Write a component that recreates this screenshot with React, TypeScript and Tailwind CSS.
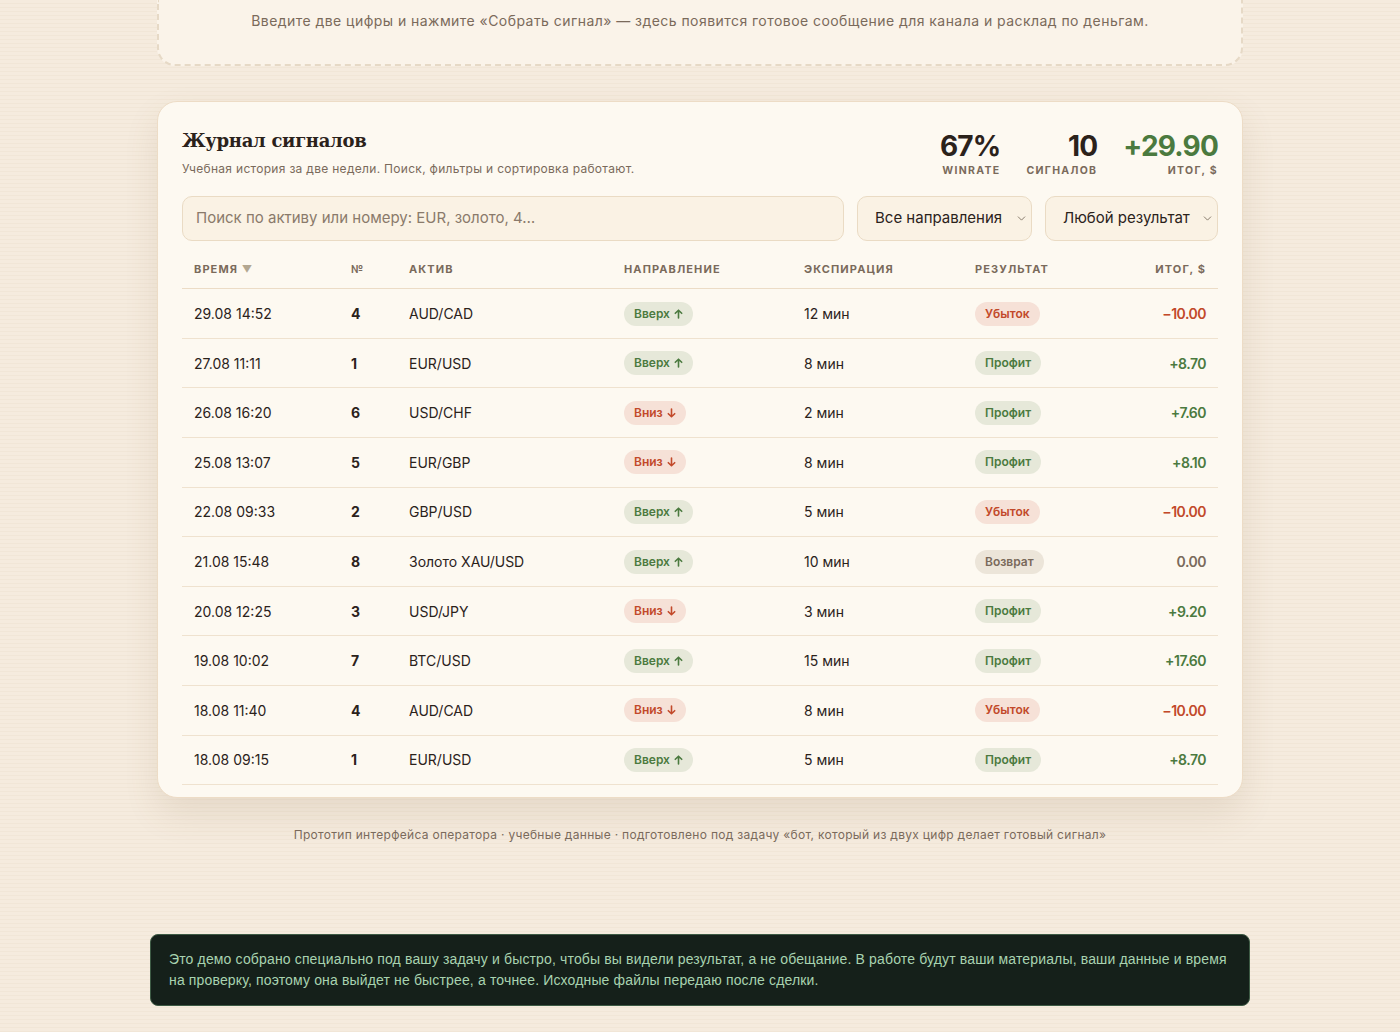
import React from 'react';
import { ChevronDown } from 'lucide-react';

type Row = {
  time: string;
  num: number;
  asset: string;
  dir: 'up' | 'down';
  exp: string;
  res: 'win' | 'loss' | 'refund';
  total: string;
};

const rows: Row[] = [
  { time: '29.08 14:52', num: 4, asset: 'AUD/CAD', dir: 'up', exp: '12 мин', res: 'loss', total: '−10.00' },
  { time: '27.08 11:11', num: 1, asset: 'EUR/USD', dir: 'up', exp: '8 мин', res: 'win', total: '+8.70' },
  { time: '26.08 16:20', num: 6, asset: 'USD/CHF', dir: 'down', exp: '2 мин', res: 'win', total: '+7.60' },
  { time: '25.08 13:07', num: 5, asset: 'EUR/GBP', dir: 'down', exp: '8 мин', res: 'win', total: '+8.10' },
  { time: '22.08 09:33', num: 2, asset: 'GBP/USD', dir: 'up', exp: '5 мин', res: 'loss', total: '−10.00' },
  { time: '21.08 15:48', num: 8, asset: 'Золото XAU/USD', dir: 'up', exp: '10 мин', res: 'refund', total: '0.00' },
  { time: '20.08 12:25', num: 3, asset: 'USD/JPY', dir: 'down', exp: '3 мин', res: 'win', total: '+9.20' },
  { time: '19.08 10:02', num: 7, asset: 'BTC/USD', dir: 'up', exp: '15 мин', res: 'win', total: '+17.60' },
  { time: '18.08 11:40', num: 4, asset: 'AUD/CAD', dir: 'down', exp: '8 мин', res: 'loss', total: '−10.00' },
  { time: '18.08 09:15', num: 1, asset: 'EUR/USD', dir: 'up', exp: '5 мин', res: 'win', total: '+8.70' },
];

function DirPill({ dir }: { dir: Row['dir'] }) {
  if (dir === 'up') {
    return (
      <span className="inline-flex items-center gap-1 rounded-full bg-[#e6e8d9] px-[10px] h-6 text-[12px] font-semibold text-[#4b7a3f]">
        Вверх
        <svg width="9" height="10" viewBox="0 0 9 10" fill="none" stroke="currentColor" strokeWidth="1.6" strokeLinecap="round" strokeLinejoin="round">
          <path d="M4.5 9V1.2M1.3 4.3 4.5 1.2l3.2 3.1" />
        </svg>
      </span>
    );
  }
  return (
    <span className="inline-flex items-center gap-1 rounded-full bg-[#f6e1d7] px-[10px] h-6 text-[12px] font-semibold text-[#c2492a]">
      Вниз
      <svg width="9" height="10" viewBox="0 0 9 10" fill="none" stroke="currentColor" strokeWidth="1.6" strokeLinecap="round" strokeLinejoin="round">
        <path d="M4.5 1v7.8M1.3 5.7l3.2 3.1 3.2-3.1" />
      </svg>
    </span>
  );
}

function ResPill({ res }: { res: Row['res'] }) {
  if (res === 'win')
    return <span className="inline-flex items-center rounded-full bg-[#e6e8d9] px-[10px] h-6 text-[12px] font-semibold text-[#4b7a3f]">Профит</span>;
  if (res === 'loss')
    return <span className="inline-flex items-center rounded-full bg-[#f6e1d7] px-[10px] h-6 text-[12px] font-semibold text-[#c2492a]">Убыток</span>;
  return <span className="inline-flex items-center rounded-full bg-[#ece5d9] px-[10px] h-6 text-[12px] font-semibold text-[#7a6a5b]">Возврат</span>;
}

function totalColor(res: Row['res']) {
  if (res === 'win') return 'text-[#4b7a3f]';
  if (res === 'loss') return 'text-[#c2492a]';
  return 'text-[#7a6a5b]';
}

export default function App() {
  return (
    <div className="min-h-screen bg-[#f5ebde] bg-[repeating-linear-gradient(180deg,#f5ebde_0px,#f5ebde_3px,#f1e6d7_3px,#f1e6d7_4px)] font-['Inter','Noto_Sans',sans-serif] text-[#2b221b]">
      <div className="mx-auto w-[1086px]">
        <div className="h-[66px] rounded-b-[18px] border-2 border-t-0 border-dashed border-[#e6d9c6] bg-[#faf3e9] pt-[10px] text-center text-[14px] tracking-[0.45px] text-[#7a6a5b]">
          Введите две цифры и нажмите «Собрать сигнал» — здесь появится готовое сообщение для канала и расклад по деньгам.
        </div>

        <div className="mt-[35px] rounded-[20px] border border-[#eddcc6] bg-[#fdf9f1] px-6 pt-[26px] pb-3 shadow-[0_16px_34px_rgba(120,90,50,0.12)]">
          <div className="flex items-start justify-between">
            <div>
              <h2 className="font-['DejaVu_Serif',serif] text-[18px] font-bold leading-[26px] tracking-[-0.3px] text-[#2b221b]">
                Журнал сигналов
              </h2>
              <p className="mt-[6px] text-[12px] tracking-[0.3px] text-[#7a6a5b]">
                Учебная история за две недели. Поиск, фильтры и сортировка работают.
              </p>
            </div>
            <div className="flex gap-[26px] pt-[1px]">
              <div className="flex flex-col items-end">
                <span className="text-[28px] font-bold leading-[34px] tracking-[-0.8px] text-[#2b221b]">67%</span>
                <span className="text-[10.5px] font-bold tracking-[1.3px] text-[#7a6a5b]">WINRATE</span>
              </div>
              <div className="flex flex-col items-end">
                <span className="text-[28px] font-bold leading-[34px] tracking-[-0.8px] text-[#2b221b]">10</span>
                <span className="text-[10.5px] font-bold tracking-[1.3px] text-[#7a6a5b]">СИГНАЛОВ</span>
              </div>
              <div className="flex flex-col items-end">
                <span className="text-[28px] font-bold leading-[34px] tracking-[-0.8px] text-[#4b7a3f]">+29.90</span>
                <span className="text-[10.5px] font-bold tracking-[1.3px] text-[#7a6a5b]">ИТОГ, $</span>
              </div>
            </div>
          </div>

          <div className="mt-[17px] flex gap-[13px]">
            <div className="flex h-[45px] flex-1 items-center rounded-[10px] border border-[#eadbc4] bg-[#faf2e4] px-[13px] text-[15px] text-[#8a7a6b]">
              Поиск по активу или номеру: EUR, золото, 4…
            </div>
            <div className="flex h-[45px] w-[175px] items-center justify-between rounded-[10px] border border-[#eadbc4] bg-[#faf2e4] pl-[17px] pr-[3px] text-[15px] text-[#2b221b]">
              Все направления
              <ChevronDown size={13} strokeWidth={1.5} className="text-[#6f6152]" />
            </div>
            <div className="flex h-[45px] w-[173px] items-center justify-between rounded-[10px] border border-[#eadbc4] bg-[#faf2e4] pl-[17px] pr-[3px] text-[15px] text-[#2b221b]">
              Любой результат
              <ChevronDown size={13} strokeWidth={1.5} className="text-[#6f6152]" />
            </div>
          </div>

          <table className="mt-[9px] w-full border-collapse">
            <thead>
              <tr className="h-[39px] border-b border-[#ecdcc6] text-left text-[11px] font-bold tracking-[1.1px] text-[#7a6a5b]">
                <th className="w-[157px] px-3 font-bold">
                  ВРЕМЯ <span className="text-[10px] text-[#b3a791]">▼</span>
                </th>
                <th className="w-[58px] px-3 font-bold">№</th>
                <th className="w-[215px] px-3 font-bold">АКТИВ</th>
                <th className="w-[180px] px-3 font-bold">НАПРАВЛЕНИЕ</th>
                <th className="w-[171px] px-3 font-bold">ЭКСПИРАЦИЯ</th>
                <th className="px-3 font-bold">РЕЗУЛЬТАТ</th>
                <th className="px-3 text-right font-bold">ИТОГ, $</th>
              </tr>
            </thead>
            <tbody>
              {rows.map((r, i) => (
                <tr key={i} className="h-[49.6px] border-b border-[#efe2cf] text-[14px]">
                  <td className="px-3">{r.time}</td>
                  <td className="px-3 font-bold">{r.num}</td>
                  <td className="px-3">{r.asset}</td>
                  <td className="px-3">
                    <DirPill dir={r.dir} />
                  </td>
                  <td className="px-3">{r.exp}</td>
                  <td className="px-3">
                    <ResPill res={r.res} />
                  </td>
                  <td className={`px-3 text-right font-semibold tracking-[-0.5px] ${totalColor(r.res)}`}>{r.total}</td>
                </tr>
              ))}
            </tbody>
          </table>
        </div>

        <p className="mt-[28px] text-center text-[12px] tracking-[0.3px] text-[#7a6a5b]">
          Прототип интерфейса оператора · учебные данные · подготовлено под задачу «бот, который из двух цифр делает готовый сигнал»
        </p>
      </div>

      <div className="mx-auto mt-[90px] w-[1100px] pb-[26px]">
        <div className="rounded-[8px] border border-[#3d5a44] bg-[#15201a] py-[14px] pl-[18px] pr-[22px] font-['Liberation_Sans',Arial,sans-serif] text-[14px] leading-[21px] tracking-[0.15px] text-[#a8d3b0]">
          Это демо собрано специально под вашу задачу и быстро, чтобы вы видели результат, а не обещание. В работе будут ваши материалы, ваши данные и время на проверку, поэтому она выйдет не быстрее, а точнее. Исходные файлы передаю после сделки.
        </div>
      </div>
    </div>
  );
}
